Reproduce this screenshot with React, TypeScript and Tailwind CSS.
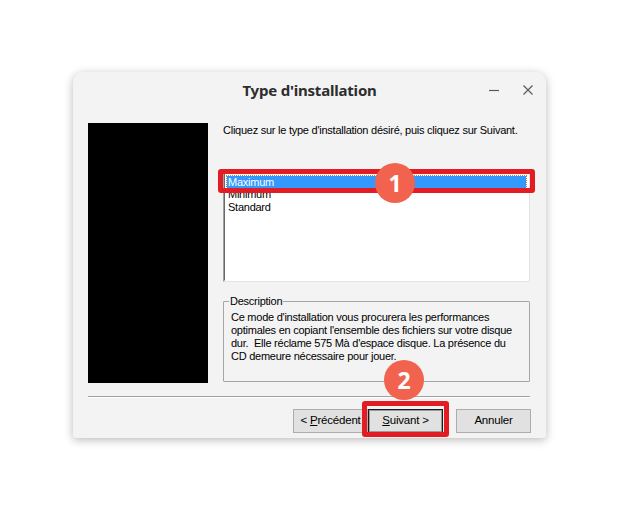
import React from 'react';

const sys = { fontFamily: '"Liberation Sans", Arial, sans-serif' };

const Badge = ({ n, className }: { n: string; className: string }) => (
  <div
    className={`absolute w-[40px] h-[40px] rounded-full bg-[#f2634f] flex items-center justify-center text-white font-bold text-[23px] ${className}`}
    style={{ fontFamily: '"Open Sans", "Noto Sans", sans-serif' }}
  >
    {n}
  </div>
);

const WinButton = ({ children, className = '' }: { children: React.ReactNode; className?: string }) => (
  <div
    className={`h-[24px] w-[75px] flex items-center justify-center bg-[#e1e1e1] border border-[#adadad] text-[11.5px] tracking-[-0.2px] text-black ${className}`}
  >
    {children}
  </div>
);

export default function App() {
  return (
    <div className="w-[619px] h-[512px] bg-white pt-[72px] pl-[73px]">
      <div className="relative w-[473px] h-[366px] bg-[#f3f3f3] rounded-t-[10px] rounded-b-[3px] shadow-[0_2px_10px_rgba(0,0,0,0.28)]">
        {/* title bar */}
        <div className="h-[36px] grid grid-cols-[1fr_auto_1fr] items-center">
          <div />
          <div
            className="text-[15px] font-bold text-[#2d2d2d] tracking-[-0.2px]"
            style={{ fontFamily: '"Noto Sans", "Open Sans", sans-serif' }}
          >
            Type d'installation
          </div>
          <div className="flex justify-end items-center gap-[22px] pr-[12px]">
            <svg width="12" height="12" viewBox="0 0 12 12">
              <path d="M1 6.5h10" stroke="#5a5a5a" strokeWidth="1.2" />
            </svg>
            <svg width="12" height="12" viewBox="0 0 12 12">
              <path d="M1.5 1.5l9 9M10.5 1.5l-9 9" stroke="#5a5a5a" strokeWidth="1.2" />
            </svg>
          </div>
        </div>

        {/* body */}
        <div className="px-[15px] pt-[15px] tracking-[-0.25px]" style={sys}>
          <div className="flex gap-[15px]">
            <div className="w-[120px] h-[260px] bg-black" />
            <div className="w-[307px] flex flex-col">
              <p className="text-[11px] leading-[13px] text-black mt-[1px] whitespace-nowrap">
                Cliquez sur le type d'installation désiré, puis cliquez sur Suivant.
              </p>
              {/* listbox */}
              <div className="mt-[35px] h-[110px] border-t-[#a0a0a0] border-l-[#a0a0a0] border-r-[#e3e3e3] border-b-[#e3e3e3] border bg-white">
                <div className="h-full border border-t-[#696969] border-l-[#696969] border-r-white border-b-white p-[2px] text-[11px] leading-[13px] text-black">
                  <div className="bg-[#3399ff] text-white pl-[1px] h-[12px] leading-[12px] outline-1 outline-dotted outline-[#c08040]">Maximum</div>
                  <div className="pl-[1px]">Minimum</div>
                  <div className="pl-[1px]">Standard</div>
                </div>
              </div>
              {/* description group */}
              <div className="relative mt-[19px] h-[81px] border border-[#a6a6a6] rounded-[1px]">
                <span className="absolute -top-[8px] left-[5px] bg-[#f3f3f3] px-[1px] text-[11px] leading-[14px] text-black">
                  Description
                </span>
                <p className="pt-[9px] pl-[7px] pr-[4px] text-[11px] leading-[13px] text-black whitespace-nowrap">
                  Ce mode d'installation vous procurera les performances
                  <br />
                  optimales en copiant l'ensemble des fichiers sur votre disque
                  <br />
                  dur.&nbsp; Elle réclame 575 Mà d'espace disque. La présence du
                  <br />
                  CD demeure nécessaire pour jouer.
                </p>
              </div>
            </div>
          </div>

          {/* separator */}
          <div className="mt-[13px] h-[2px] border-t border-[#a0a0a0] border-b-white border-b w-[442px]" />

          {/* buttons */}
          <div className="mt-[11px] flex justify-end w-[443px]">
            <WinButton className="w-[74px]">
              &lt;&nbsp;<span className="underline">P</span>récédent
            </WinButton>
            <div className="h-[24px] w-[75px] border border-[#1a1a1a] bg-[#e1e1e1]">
              <div className="h-full border border-[#9a9a9a] flex items-center justify-center text-[11.5px] tracking-[-0.2px] text-black">
                <span className="underline">S</span>uivant &gt;
              </div>
            </div>
            <WinButton className="ml-[13px]">Annuler</WinButton>
          </div>
        </div>

        {/* annotations */}
        <div className="absolute left-[145px] top-[97px] w-[317px] h-[24px] border-[5px] border-[#e31b23] rounded-[3px]" />
        <Badge n="1" className="left-[302px] top-[91px]" />
        <div className="absolute left-[289px] top-[329px] w-[87px] h-[36px] border-[5px] border-[#e31b23] rounded-[3px]" />
        <Badge n="2" className="left-[311px] top-[288px]" />
      </div>
    </div>
  );
}
